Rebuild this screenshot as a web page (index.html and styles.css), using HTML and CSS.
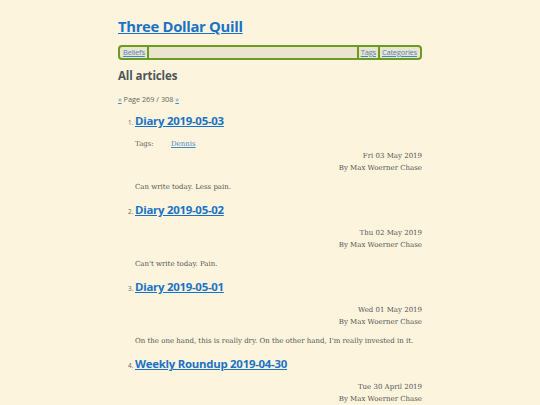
FILE: index.html
```html
<!DOCTYPE html>
<html>
<head>
<meta charset="utf-8">
<link rel="stylesheet" href="styles.css">
</head>
<body>
<div class="page">
  <header class="site-header">
    <h1 class="site-title"><a href="#">Three Dollar Quill</a></h1>
    <nav class="nav">
      <a class="nav-link" href="#">Beliefs</a>
      <span class="nav-spacer"></span>
      <a class="nav-link" href="#">Tags</a>
      <a class="nav-link sep" href="#">Categories</a>
    </nav>
  </header>
  <main>
    <h2 class="section-title">All articles</h2>
    <p class="pager"><a href="#">«</a> Page 269 / 308 <a href="#">»</a></p>
    <ol class="articles" start="1">
      <li class="article">
        <h3 class="article-title"><a href="#">Diary 2019-05-03</a></h3>
        <div class="tags"><span class="tags-label">Tags:</span><a href="#">Dennis</a></div>
        <div class="meta"><div>Fri 03 May 2019</div><div>By Max Woerner Chase</div></div>
        <p class="summary">Can write today. Less pain.</p>
      </li>
      <li class="article">
        <h3 class="article-title"><a href="#">Diary 2019-05-02</a></h3>
        <div class="meta gap"><div>Thu 02 May 2019</div><div>By Max Woerner Chase</div></div>
        <p class="summary">Can't write today. Pain.</p>
      </li>
      <li class="article">
        <h3 class="article-title"><a href="#">Diary 2019-05-01</a></h3>
        <div class="meta gap"><div>Wed 01 May 2019</div><div>By Max Woerner Chase</div></div>
        <p class="summary">On the one hand, this is really dry. On the other hand, I'm really invested in it.</p>
      </li>
      <li class="article">
        <h3 class="article-title"><a href="#">Weekly Roundup 2019-04-30</a></h3>
        <div class="meta gap"><div>Tue 30 April 2019</div><div>By Max Woerner Chase</div></div>
      </li>
    </ol>
  </main>
</div>
</body>
</html>
```
FILE: styles.css
```css
html, body {
  margin: 0;
  padding: 0;
  background: #fcf4dd;
}
body {
  font-family: "DejaVu Serif", "Liberation Serif", serif;
  font-size: 7px;
  color: #555553;
}
.page {
  width: 304px;
  margin: 0 auto;
  padding-top: 15px;
}
a {
  color: #1a72c6;
}
.site-title {
  margin: 0;
  font-family: "Open Sans", "Noto Sans", sans-serif;
  font-size: 14.8px;
  line-height: 22px;
  font-weight: 700;
  letter-spacing: -0.3px;
}
.site-title a {
  color: #1a72c6;
}
.nav {
  margin-top: 8px;
  height: 11px;
  display: flex;
  align-items: stretch;
  border: 2px solid #6c9b22;
  border-radius: 4px;
  background: #ebe4cf;
  padding: 0 1px;
  font-family: "Open Sans", "Noto Sans", sans-serif;
  font-size: 7.5px;
  line-height: 11px;
}
.nav-link {
  color: #4a86c0;
  padding: 0 2px;
  letter-spacing: -0.2px;
}
.nav-spacer {
  flex: 1;
  border-left: 2px solid #6c9b22;
  border-right: 2px solid #6c9b22;
}
.nav-link.sep {
  border-left: 2px solid #6c9b22;
}
.section-title {
  margin: 8px 0 0;
  font-family: "Open Sans", "Noto Sans", sans-serif;
  font-size: 11.5px;
  line-height: 16px;
  font-weight: 700;
  color: #4d5757;
  letter-spacing: -0.1px;
}
.pager {
  margin: 9px 0 0;
  font-family: "Open Sans", "Noto Sans", sans-serif;
  font-size: 7.3px;
  line-height: 12px;
  color: #666660;
}
.pager a {
  color: #4a86c0;
}
.articles {
  margin: 8px 0 0;
  padding-left: 17px;
}
.article {
  font-size: 6.3px;
  font-family: "Open Sans", "Noto Sans", sans-serif;
  color: #666660;
  margin-bottom: 9px;
}
.article-title {
  display: inline;
  margin: 0;
  font-family: "Open Sans", "Noto Sans", sans-serif;
  font-size: 11.4px;
  line-height: 16px;
  font-weight: 700;
  letter-spacing: -0.25px;
}
.tags {
  margin-top: 9px;
  font-family: "DejaVu Serif", "Liberation Serif", serif;
  font-size: 7px;
  line-height: 12px;
  display: flex;
}
.tags-label {
  width: 36px;
}
.tags a {
  color: #4a86c0;
}
.meta {
  font-family: "DejaVu Serif", "Liberation Serif", serif;
  font-size: 7px;
  line-height: 12px;
  text-align: right;
  color: #555553;
}
.meta.gap {
  margin-top: 9px;
}
.summary {
  margin: 7px 0 0;
  font-family: "DejaVu Serif", "Liberation Serif", serif;
  font-size: 7px;
  line-height: 12px;
  color: #555553;
}
```
